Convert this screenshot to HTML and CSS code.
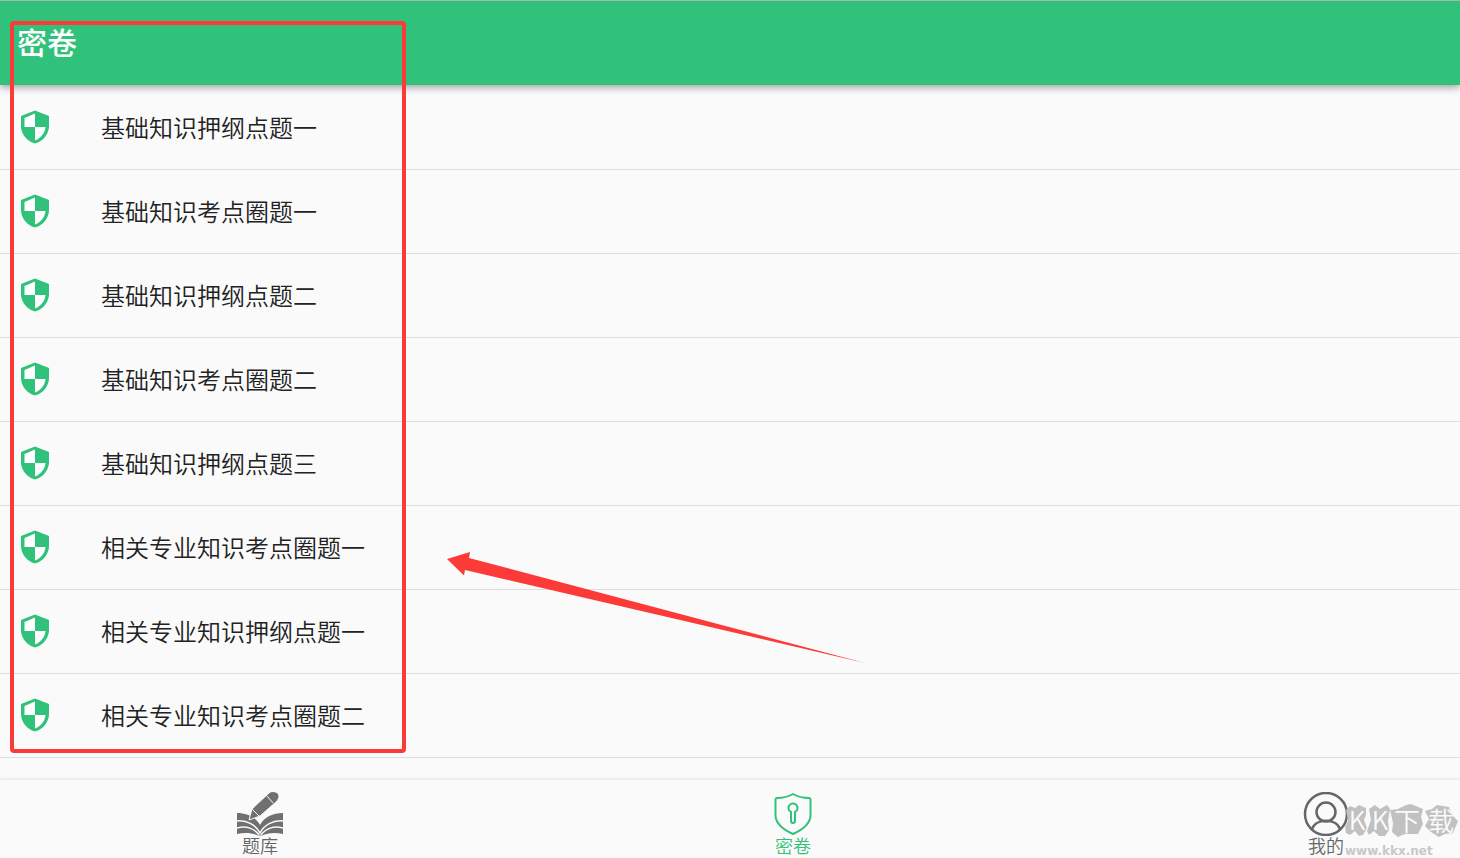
FILE: index.html
```
<!DOCTYPE html>
<html lang="zh-CN">
<head>
    <meta charset="UTF-8">
    <meta name="viewport" content="width=device-width, initial-scale=1.0">
    <title>密卷</title>
    <link rel="stylesheet" href="styles.css">
</head>
<body>
    <!-- Shared icon -->
    <svg class="sprite" aria-hidden="true">
        <symbol id="shield" viewBox="0 0 28 34">
            <path fill="#30c27b" d="M14 .5 28 6V16C28 24 22 31.500 14 33.500 6 31.500 0 24 0 16V6Z"/>
            <path fill="#fff" d="M14 3.500V17H3.500V8ZM14 17H24.500C24 23 20 28 14 30.500Z"/>
        </symbol>
    </svg>

    <header class="app-bar">
        <h1>密卷</h1>
    </header>

    <!-- Paper List -->
    <main class="papers">
        <ul class="paper-list">
            <li><a href="#"><svg class="shield"><use href="#shield"/></svg>基础知识押纲点题一</a></li>
            <li><a href="#"><svg class="shield"><use href="#shield"/></svg>基础知识考点圈题一</a></li>
            <li><a href="#"><svg class="shield"><use href="#shield"/></svg>基础知识押纲点题二</a></li>
            <li><a href="#"><svg class="shield"><use href="#shield"/></svg>基础知识考点圈题二</a></li>
            <li><a href="#"><svg class="shield"><use href="#shield"/></svg>基础知识押纲点题三</a></li>
            <li><a href="#"><svg class="shield"><use href="#shield"/></svg>相关专业知识考点圈题一</a></li>
            <li><a href="#"><svg class="shield"><use href="#shield"/></svg>相关专业知识押纲点题一</a></li>
            <li><a href="#"><svg class="shield"><use href="#shield"/></svg>相关专业知识考点圈题二</a></li>
        </ul>
    </main>

    <!-- Bottom Navigation -->
    <nav class="tab-bar">
        <a class="tab" href="#">
            <svg viewBox="0 0 46 44" fill="#707070">
                <path d="M0 21C10 21 19 25 23 33 27 25 36 21 46 21V42C38 40 30 41 25 43.500H21C16 41 8 40 0 42Z"/>
                <path stroke="#fafafa" stroke-width="1.500" fill="none" d="M0 29C10 28 19 33 23 41 27 33 36 28 46 29M0 36C9 33 18 37 22 43M46 36C37 33 28 37 24 43"/>
                <path stroke="#fafafa" d="M12 28 15 17 32 1C35-2 42 0 42 4 42 6 41 8 39 10L23 24Z"/>
                <path stroke="#fafafa" fill="none" d="M30 4 36 11M15 17 22 24"/>
            </svg>
            <span>题库</span>
        </a>
        <a class="tab active" href="#">
            <svg viewBox="0 0 46 44" fill="none" stroke="#30c27b" stroke-width="2" stroke-linejoin="round">
                <path d="M23 2C18 5 12 6 7 6 6 6 5.500 7 5.500 8V23C5.500 32 14 38 23 42 32 38 40.500 32 40.500 23V8C40.500 7 40 6 39 6 34 6 28 5 23 2Z"/>
                <path d="M21 20A4.500 4.500 0 1 1 25 20V29A2 2 0 0 1 21 29Z"/>
            </svg>
            <span>密卷</span>
        </a>
        <a class="tab" href="#">
            <svg viewBox="0 0 46 44" fill="none" stroke="#666" stroke-width="2.500">
                <circle cx="23" cy="22" r="21"/>
                <circle cx="23" cy="20" r="9.500"/>
                <path d="M9 37C13 26 33 26 37 37"/>
            </svg>
            <span>我的</span>
        </a>
    </nav>

    <!-- Watermark -->
    <div class="watermark">
        <svg viewBox="0 0 114 52">
            <path fill="#c1c1c1" d="M1 8 5 4 10 6 14 3 21 6 21 13 19 18 22 26 18 33 14 34 10 29 5 33 1 31 0 25 3 19ZM24 7 30 3 35 7 42 3 45 7 43 19 44 28 40 34 34 34 29 29 24 33 22 29 26 18ZM45 8 53 7 61 3 66 2 78 7 76 15 78 22 73 32 60 32 53 35 47 30 48 21ZM80 9 87 7 92 3 104 5 107 13 113 19 108 31 100 32 94 35 86 30 80 24 84 17Z"/>
            <g class="watermark-name">
                <text x="12" y="28">K</text>
                <text x="35" y="28">K</text>
                <text x="62" y="29">下</text>
                <text x="96" y="29">载</text>
            </g>
            <text class="watermark-url" x="0" y="53">www.kkx.net</text>
        </svg>
    </div>

    <!-- Highlight frame and arrow -->
    <div class="highlight"></div>
    <svg class="arrow" viewBox="0 0 420 112">
        <path fill="#fc3a38" d="M0 7 23 0 22 6 418 111 18 18 17 23.500Z"/>
    </svg>
</body>
</html>
```
FILE: styles.css
```
/* General Styling */
* {
    box-sizing: border-box;
}

body {
    font-family: 'Noto Sans CJK SC', sans-serif;
    font-weight: 350;
    margin: 0;
    height: 100vh;
    display: flex;
    flex-direction: column;
    position: relative;
    overflow: hidden;
    background: #fafafa;
    color: #222;
}

a {
    color: inherit;
    text-decoration: none;
}

.sprite {
    display: none;
}

/* Header */
.app-bar {
    flex: none;
    height: 85px;
    padding: 0 17px 4px;
    display: flex;
    align-items: center;
    border-top: 1px solid #a9b5af;
    background: #30c27b;
    box-shadow: 0 2px 8px rgba(0, 0, 0, 0.4);
    z-index: 1;
}

.app-bar h1 {
    margin: 0;
    font-size: 30px;
    font-weight: 500;
    color: #fff;
}

/* Paper List */
.papers {
    flex: 1;
    min-height: 0;
    overflow: hidden;
}

.paper-list {
    list-style: none;
    margin: 0;
    padding: 1px 0 0;
}

.paper-list a {
    display: flex;
    align-items: center;
    gap: 52px;
    height: 84px;
    padding: 0 21px 2px;
    border-bottom: 1px solid #dedede;
    font-size: 24px;
}

.shield {
    width: 28px;
    height: 34px;
}

/* Bottom Navigation */
.tab-bar {
    flex: none;
    display: flex;
    justify-content: space-between;
    align-items: flex-start;
    height: 78px;
    padding: 12px 111px 0 237px;
    background: #fafafa;
    box-shadow: 0 -1px 3px rgba(0, 0, 0, 0.1);
    z-index: 1;
}

.tab {
    display: flex;
    flex-direction: column;
    align-items: center;
    width: 46px;
    font-size: 18px;
    line-height: 18px;
    color: #666;
}

.tab svg {
    width: 46px;
    height: 44px;
}

.tab.active {
    color: #30c27b;
}

/* Watermark */
.watermark {
    position: absolute;
    right: 0;
    bottom: 0;
    z-index: 2;
    width: 115px;
    height: 56px;
}

.watermark svg {
    display: block;
    width: 114px;
    height: 52px;
    overflow: visible;
}

.watermark-name {
    font-size: 26px;
    text-anchor: middle;
    fill: #fafafa;
}

.watermark-url {
    font-family: 'DejaVu Sans', sans-serif;
    font-size: 12px;
    font-weight: 700;
    fill: #c8c8c8;
}

/* Highlight frame and arrow */
.highlight {
    position: absolute;
    top: 21px;
    left: 10px;
    z-index: 3;
    width: 396px;
    height: 732px;
    border: 4px solid #fc3a38;
    border-radius: 4px;
    pointer-events: none;
}

.arrow {
    position: absolute;
    top: 552px;
    left: 447px;
    z-index: 3;
    width: 420px;
    height: 112px;
    pointer-events: none;
}
```
